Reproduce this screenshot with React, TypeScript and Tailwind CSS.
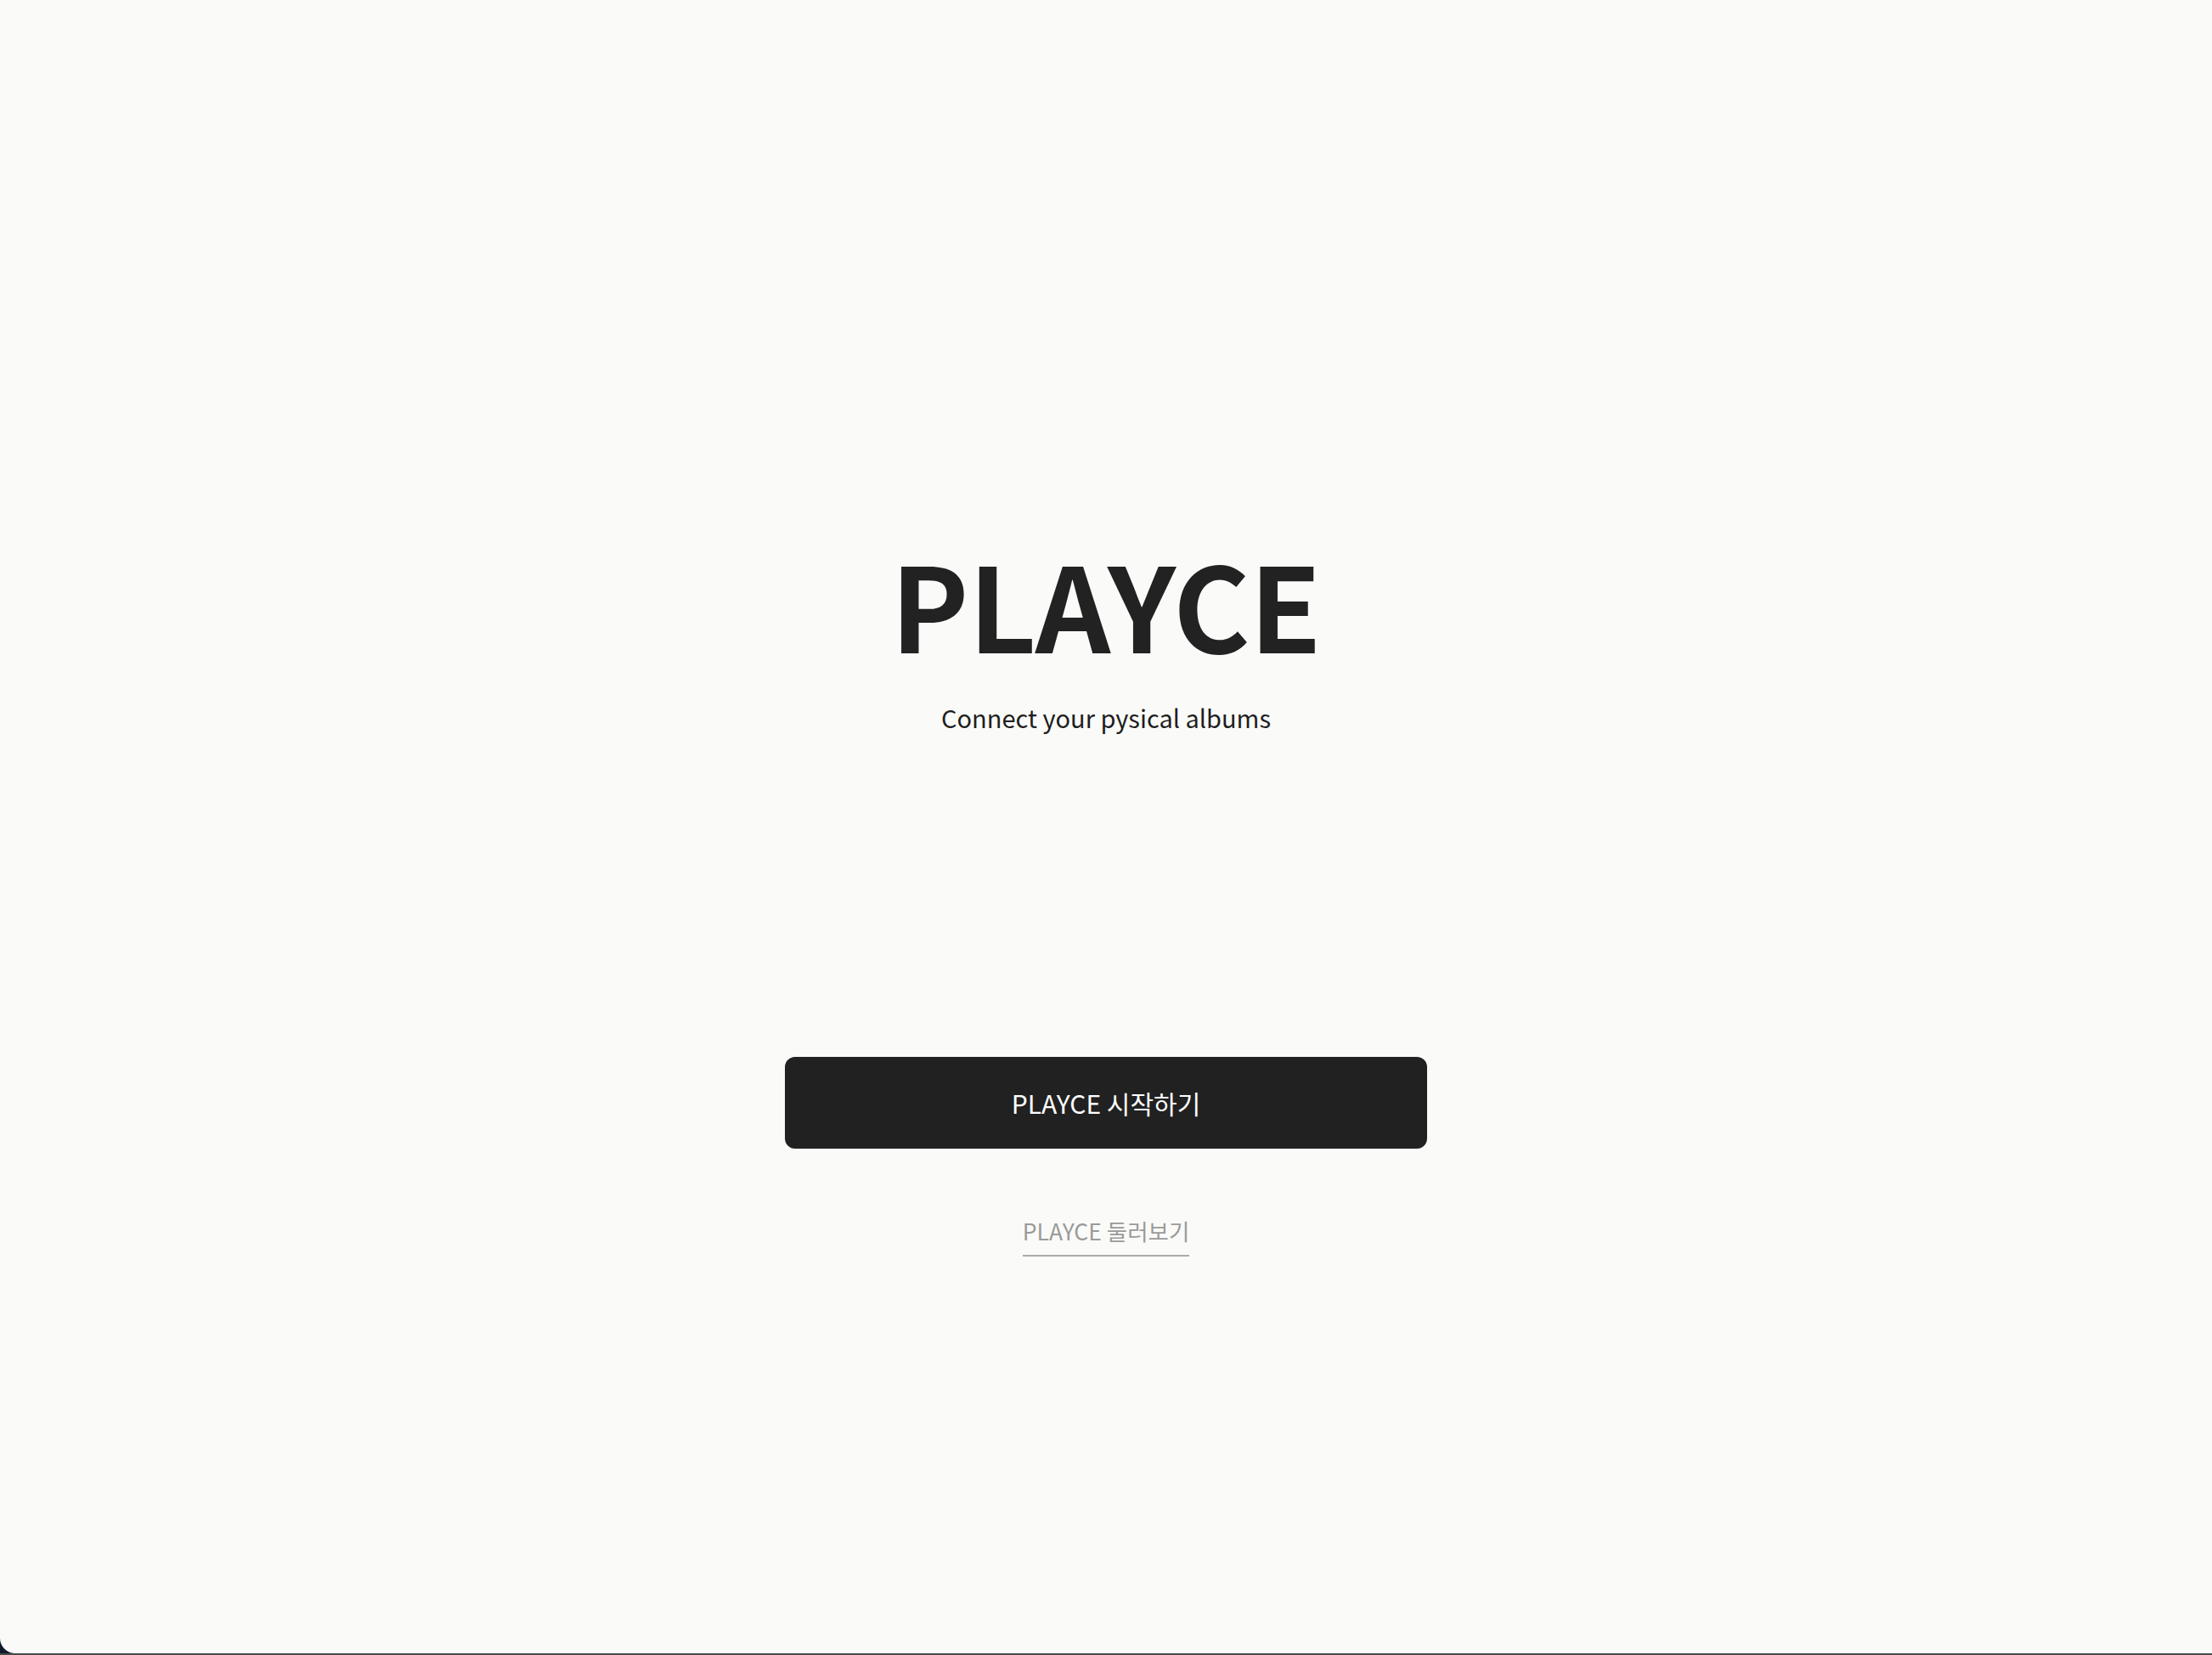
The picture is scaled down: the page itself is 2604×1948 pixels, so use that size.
import React from 'react';

const font = { fontFamily: '"Noto Sans CJK KR", "Noto Sans", sans-serif' };

export default function App() {
  return (
    <div className="w-[2604px] h-[1948px] bg-[#0f1a2a] flex flex-col" style={font}>
      <main className="h-[1946px] bg-[#fafaf8] rounded-bl-[18px] flex flex-col items-center pt-[640px]">
        <h1 className="text-[138px] leading-none font-bold text-[#222222] tracking-[-0.5px]">PLAYCE</h1>
        <p className="mt-[52px] text-[29px] leading-none text-[#1e1e1e]">Connect your pysical albums</p>

        <button className="mt-[385px] w-[756px] h-[108px] rounded-[12px] bg-[#212121] text-white text-[30px] leading-none flex items-center justify-center">
          PLAYCE 시작하기
        </button>

        <a className="mt-[84px] text-[26.5px] leading-none text-[#9a9a9a] pb-[14px] border-b-2 border-[#aaaaaa] cursor-pointer">
          PLAYCE 둘러보기
        </a>
      </main>
      <div className="h-[2px] bg-[#4a4a4a]" />
    </div>
  );
}
